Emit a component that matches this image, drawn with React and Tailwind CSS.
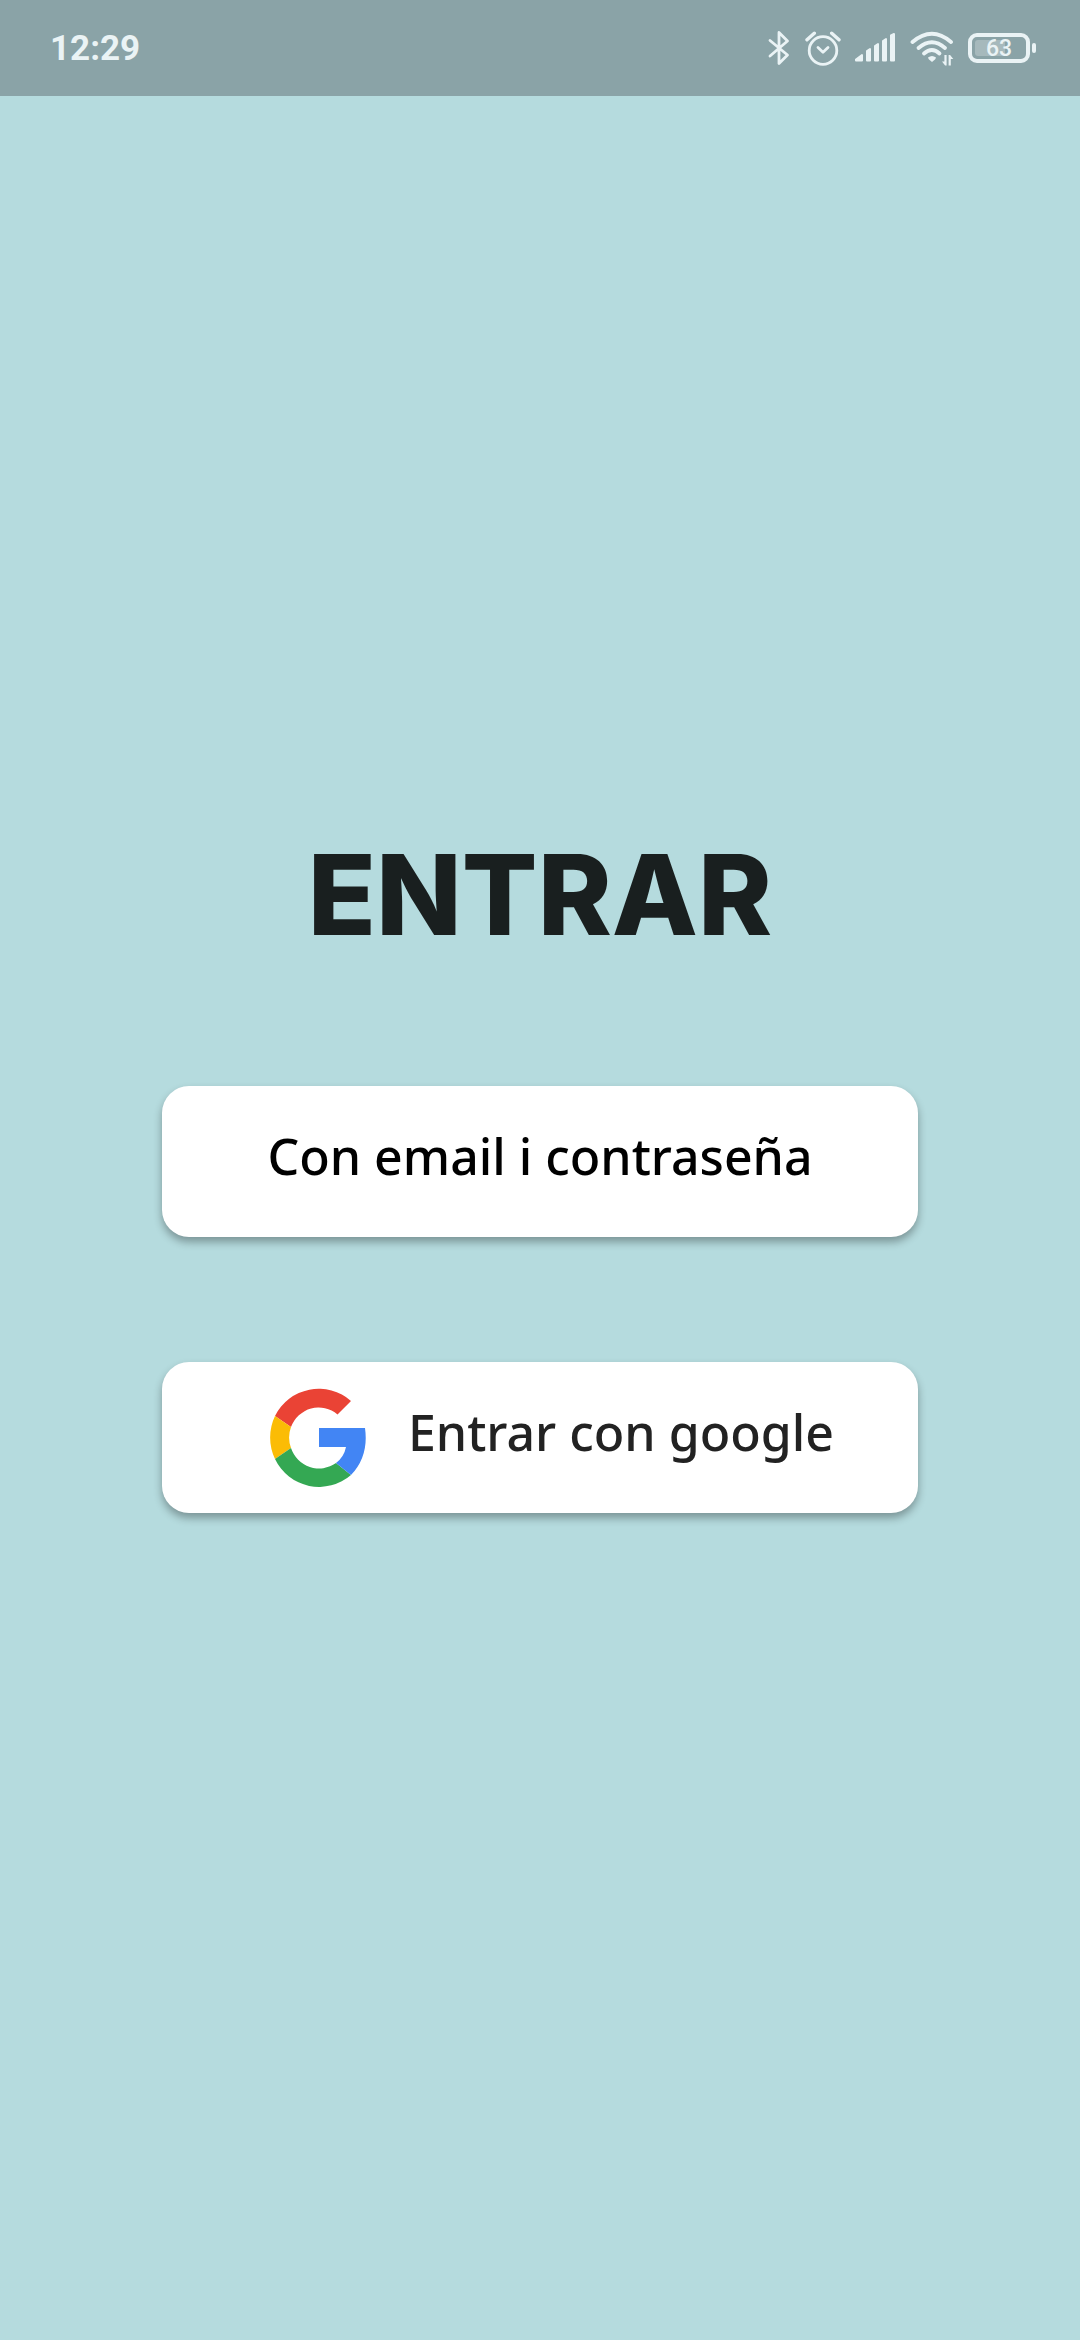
function BluetoothIcon() {
  return (
    <svg className="h-9 w-6" viewBox="0 0 24 36" fill="none" stroke="currentColor" strokeWidth="2.8" strokeLinecap="round" strokeLinejoin="round" aria-hidden="true">
      <path d="M3 10.5 20.5 25 12 33.5V2.5L20.5 11 3 26" />
    </svg>
  );
}

function AlarmIcon() {
  return (
    <svg className="h-9 w-9" viewBox="0 0 36 36" fill="none" stroke="currentColor" aria-hidden="true">
      <circle cx="18" cy="20.5" r="13.8" strokeWidth="2.8" />
      <path d="M13 17.5l5 4.7 5-4.7" strokeWidth="2.8" strokeLinecap="round" strokeLinejoin="round" />
      <path d="M2 9.8 9.3 3.2M34 9.8 26.7 3.2" strokeWidth="3.4" strokeLinecap="round" />
    </svg>
  );
}

function SignalIcon() {
  return (
    <svg className="h-9 w-10" viewBox="0 0 40 36" fill="currentColor" stroke="currentColor" strokeLinejoin="round" aria-hidden="true">
      <path d="M1 30.5v-1l6-4.500v5.500zM12 30.500V21l3-2v11.500zM20 30.500V16l3-2v16.500zM28 30.500V11l3-2v21.500zM36 30.500V5.500l3-1.500v26.500z" strokeWidth="2" />
    </svg>
  );
}

function WifiIcon() {
  return (
    <svg className="h-9 w-[45px]" viewBox="-1 0 45 36" aria-hidden="true">
      <g fill="none" stroke="currentColor" strokeWidth="3.8" strokeLinecap="round">
        <path d="M2.500 12Q22-4.500 41 12" />
        <path d="M8.500 18Q22 6.500 35 18" />
        <path d="M14 23.500Q22 16.500 29.500 23.500" />
      </g>
      <path d="M18 27.500Q22 24.500 26 27.500Q26 29 22 32Q18 29 18 27.500Z" fill="currentColor" />
      <path d="M36.600 25v10.500h-1.500l-3.100-4h2.400V25zM38.600 35.500V25h1.500l3.200 4h-2.500v6.500z" fill="currentColor" />
    </svg>
  );
}

function Battery({ level }) {
  return (
    <div className="flex items-center gap-0.5" role="img" aria-label={`${level}%`}>
      <div className="relative flex h-[30px] w-[62px] items-center justify-center rounded-[9px] border-4 border-current">
        <div className="absolute inset-y-[3px] left-[3px] right-[3px]">
          <div className="h-full rounded-[3px] bg-[#a6b9bc]" style={{ width: `${level}%` }} />
        </div>
        <span className="relative pt-0.5 font-['Roboto',sans-serif] text-[23px] leading-6 font-medium">{level}</span>
      </div>
      <div className="h-2.5 w-1 rounded-full bg-current" />
    </div>
  );
}

function GoogleLogo() {
  return (
    <svg className="h-[99px] w-24 shrink-0" viewBox="0 0 96 99" aria-hidden="true">
      <path fill="#ea4335" d="M81 13 67.500 26.500A29.500 30 0 0 0 21 39L5 28A49 49.500 0 0 1 81 13Z" />
      <path fill="#fbbc05" d="M5 28 21 39A29.500 30 0 0 0 21 60L5 71A49 49.500 0 0 1 5 28Z" />
      <path fill="#34a853" d="M5 71 21 60A29.500 30 0 0 0 66 75L81 87A49 49.500 0 0 1 5 71Z" />
      <path fill="#4285f4" d="M49 40H95Q99 68 81 87L66 75Q74 69 76 59H49Z" />
    </svg>
  );
}

export default function App() {
  return (
    <div className="flex min-h-screen flex-col bg-[#b5dbde]">
      <header className="flex h-24 items-center justify-between bg-[#8aa3a7] pr-11 pl-[50px] text-[#eaf3f5]">
        <time className="pt-0.5 font-['Roboto',sans-serif] text-[35px] leading-10 font-bold">12:29</time>
        <div className="flex items-center gap-3.5">
          <BluetoothIcon />
          <AlarmIcon />
          <SignalIcon />
          <WifiIcon />
          <Battery level={63} />
        </div>
      </header>

      <main className="flex flex-1 flex-col items-center justify-center gap-[125px] pb-24">
        <h1 className="font-['Inter',sans-serif] text-[112px] leading-[134px] font-extrabold text-[#191f1f]">
          ENTRAR
        </h1>
        <button type="button" className="flex h-[151px] w-[70%] items-center justify-center rounded-[27px] bg-white pb-3 font-['Noto_Sans',sans-serif] text-[50px] leading-[72px] font-medium text-black shadow-[0_5px_8px_rgba(0,0,0,0.32)]">
          Con email i contraseña
        </button>
        <button type="button" className="flex h-[151px] w-[70%] items-center gap-[42px] rounded-[27px] bg-white pl-[108px] font-['Noto_Sans',sans-serif] text-[50px] leading-[72px] font-medium text-[#222222] shadow-[0_5px_8px_rgba(0,0,0,0.32)]">
          <GoogleLogo />
          <span className="pb-3 whitespace-nowrap">Entrar con google</span>
        </button>
      </main>
    </div>
  );
}
